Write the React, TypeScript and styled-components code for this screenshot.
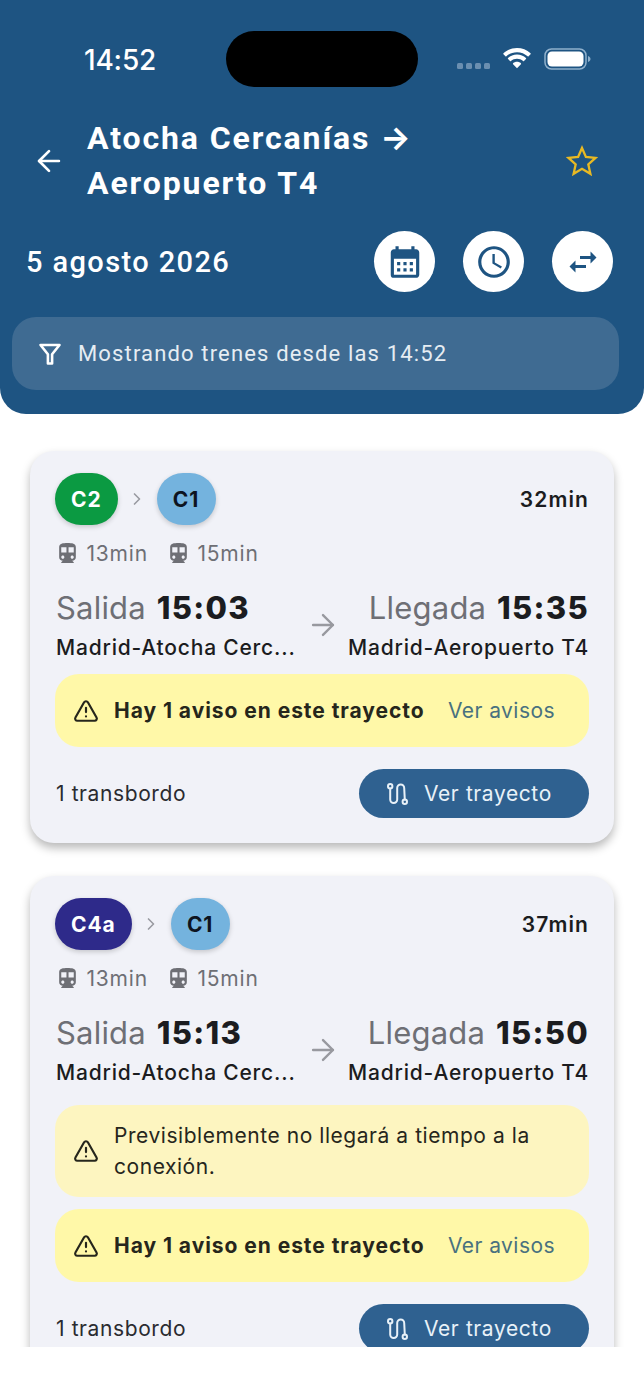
import React from 'react';
import styled, {createGlobalStyle} from 'styled-components';
import {ArrowLeft, ArrowRight, ChevronRight, TriangleAlert} from 'lucide-react';
import {MdCalendarMonth, MdAccessTime, MdSwapHoriz, MdDirectionsSubway} from 'react-icons/md';

const colors = {
  header: '#1e5482',
  card: '#f1f2f8',
  button: '#2f6190',
  ink: '#1b1c20',
  grey: '#6e6f75',
};

const GlobalStyle = createGlobalStyle`
  html, body {
    margin: 0;
    background: #fff;
  }
  body {
    font-family: 'Inter', 'Liberation Sans', sans-serif;
  }
`;

const Screen = styled.div`
  width: 644px;
  height: 1347px;
  overflow: hidden;
  background: #fff;
`;

const Header = styled.header`
  height: 414px;
  box-sizing: border-box;
  background: ${colors.header};
  border-radius: 0 0 26px 26px;
  padding-top: 31px;
  color: #fff;
  font-family: 'Roboto', sans-serif;
`;

const StatusBar = styled.div`
  height: 56px;
  display: flex;
  align-items: center;
  padding: 0 53px 0 84px;
`;

const Clock = styled.span`
  width: 142px;
  margin-top: 2px;
  font-family: 'Inter', sans-serif;
  font-size: 28px;
  font-weight: 500;
  letter-spacing: -0.2px;
`;

const Island = styled.div`
  width: 192px;
  height: 56px;
  border-radius: 28px;
  background: #000;
`;

const StatusIcons = styled.div`
  margin-left: auto;
  display: flex;
  align-items: center;
  gap: 13px;
  height: 28px;
`;

const Dots = styled.div`
  display: flex;
  gap: 3px;
  margin-top: 13px;
`;

const Dot = styled.i`
  width: 6px;
  height: 6px;
  border-radius: 1.5px;
  background: #6b8fb0;
`;

const TitleRow = styled.div`
  display: flex;
  align-items: center;
  margin-top: 28px;
  padding: 0 46px 0 32px;
`;

const IconSlot = styled.div`
  width: 55px;
  display: flex;
  flex-shrink: 0;
`;

const Title = styled.h1`
  flex: 1;
  margin: 0;
  font-size: 32px;
  line-height: 45px;
  font-weight: 700;
  letter-spacing: 1.9px;
`;

const TitleArrow = styled.span`
  font-family: 'Inter', sans-serif;
  font-weight: 700;
  letter-spacing: 0;
`;

const DateRow = styled.div`
  display: flex;
  align-items: center;
  gap: 28px;
  margin-top: 25px;
  padding: 0 31px 0 26px;
`;

const DateText = styled.div`
  flex: 1;
  font-size: 29px;
  font-weight: 500;
  letter-spacing: 1.4px;
`;

const RoundButton = styled.button`
  width: 61px;
  height: 61px;
  border: 0;
  padding: 0;
  border-radius: 50%;
  background: #fff;
  color: ${colors.header};
  display: flex;
  align-items: center;
  justify-content: center;
`;

const FilterBar = styled.div`
  height: 73px;
  margin: 25px 25px 0 12px;
  padding-left: 26px;
  box-sizing: border-box;
  display: flex;
  align-items: center;
  gap: 16px;
  background: #3f6b92;
  border-radius: 24px;
  font-size: 22px;
  letter-spacing: 1.15px;
  color: #e6edf3;
`;

const List = styled.main`
  display: flex;
  flex-direction: column;
  gap: 33px;
  padding: 37px 30px 0;
`;

const Card = styled.article`
  background: ${colors.card};
  border-radius: 24px;
  padding: 22px 25px 25px;
  box-shadow: 0 5px 10px rgba(0, 0, 0, 0.28);
`;

const TopRow = styled.div`
  display: flex;
  align-items: center;
`;

const Lines = styled.div`
  flex: 1;
  display: flex;
  align-items: center;
  gap: 9.5px;
  color: #9a9ba1;
`;

const LineBadge = styled.div<{$bg: string; $fg: string}>`
  min-width: 59px;
  height: 52px;
  padding: 0 16px;
  box-sizing: border-box;
  display: flex;
  align-items: center;
  justify-content: center;
  border-radius: 26px;
  background: ${p => p.$bg};
  color: ${p => p.$fg};
  font-size: 21px;
  font-weight: 700;
  letter-spacing: 0.9px;
  box-shadow: 0 2px 5px rgba(0, 0, 0, 0.18);
`;

const Total = styled.div`
  font-size: 21px;
  font-weight: 600;
  color: ${colors.ink};
  letter-spacing: 1.1px;
`;

const Legs = styled.div`
  display: flex;
  gap: 18px;
  margin-top: 12px;
  height: 32px;
  align-items: center;
`;

const Leg = styled.div`
  display: flex;
  align-items: center;
  gap: 6.5px;
  font-size: 21px;
  letter-spacing: 0.8px;
  color: ${colors.grey};
`;

const Times = styled.div`
  display: flex;
  align-items: center;
  margin-top: 18px;
  padding-left: 1px;
`;

const Stop = styled.div<{$end?: boolean}>`
  width: 240px;
  flex-shrink: 0;
  display: flex;
  flex-direction: column;
  align-items: ${p => (p.$end ? 'flex-end' : 'flex-start')};
`;

const TimeLine = styled.div`
  font-size: 31px;
  line-height: 42px;
  color: ${colors.grey};
  white-space: nowrap;
  letter-spacing: 0.2px;
  word-spacing: 2px;

  b {
    color: ${colors.ink};
    font-weight: 800;
    letter-spacing: 1.3px;
  }
`;

const Station = styled.div`
  margin-top: 5px;
  font-size: 21px;
  line-height: 28px;
  font-weight: 500;
  color: ${colors.ink};
  letter-spacing: 0.8px;
  white-space: nowrap;
`;

const ArrowSlot = styled.div`
  flex: 1;
  display: flex;
  justify-content: center;
  color: #98999f;
`;

const Notice = styled.div<{$soft?: boolean; $top: number}>`
  margin-top: ${p => p.$top}px;
  min-height: 73px;
  box-sizing: border-box;
  display: flex;
  align-items: center;
  gap: 15px;
  padding: ${p => (p.$soft ? '15px 18px' : '0 34px 0 18px')};
  border-radius: 24px;
  background: ${p => (p.$soft ? '#fdf5c0' : '#fff8a8')};
  color: #26261c;
  font-size: 21px;
  line-height: 31px;
  letter-spacing: 0.55px;
`;

const NoticeStrong = styled.span`
  flex: 1;
  font-weight: 700;
  white-space: nowrap;
  letter-spacing: 0.95px;
`;

const NoticeLink = styled.span`
  color: #49717f;
  letter-spacing: 0.45px;
`;

const Footer = styled.div`
  display: flex;
  align-items: center;
  justify-content: space-between;
  margin-top: 22px;
  padding-left: 1px;
`;

const Changes = styled.span`
  font-size: 21px;
  color: #2a2b30;
  letter-spacing: 0.6px;
`;

const RouteButton = styled.button`
  width: 230px;
  height: 49px;
  border: 0;
  border-radius: 25px;
  padding: 0 0 0 28px;
  background: ${colors.button};
  color: #e8f1f8;
  display: flex;
  align-items: center;
  gap: 16px;
  font-family: 'Inter', sans-serif;
  font-size: 21px;
  letter-spacing: 0.6px;
`;

const WifiIcon = () => (
  <svg width="28" height="22" viewBox="0 0 30 24" fill="#fff" preserveAspectRatio="none">
    <path d="M15 3.500c4.400 0 8.400 1.700 11.400 4.500.3.3.7.3 1 0l2.100-2.200c.3-.3.3-.8 0-1.100C25.600 1 20.500-1 15-1S4.400 1 .5 4.700c-.3.3-.3.8 0 1.100L2.600 8c.3.3.7.3 1 0C6.600 5.200 10.600 3.500 15 3.500z" transform="translate(0 1)" />
    <path d="M15 10.700c2.500 0 4.700.9 6.500 2.500.3.3.7.3 1 0l2.100-2.200c.3-.3.3-.8 0-1.100-2.500-2.400-5.900-3.900-9.600-3.900s-7.100 1.500-9.600 3.900c-.3.3-.3.8 0 1.100l2.100 2.200c.3.3.7.3 1 0 1.800-1.600 4-2.500 6.500-2.500z" transform="translate(0 1)" />
    <path d="M15 21l4.200-4.300c.3-.3.3-.8 0-1.100-1.100-1-2.600-1.600-4.200-1.600s-3.100.6-4.200 1.600c-.3.3-.3.8 0 1.100L15 21z" transform="translate(0 1)" />
  </svg>
);

const BatteryIcon = () => (
  <svg width="47" height="22" viewBox="0 0 47 22">
    <rect x="1" y="1" width="41" height="20" rx="6.500" fill="none" stroke="#8fb0cc" strokeWidth="1.500" />
    <rect x="3.500" y="3.500" width="36" height="15" rx="4.500" fill="#fff" />
    <path d="M44 8v6c1.500-.4 2.500-1.700 2.500-3S45.500 8.400 44 8z" fill="#8fb0cc" />
  </svg>
);

const StarIcon = () => (
  <svg width="32" height="32" viewBox="0 0 32 32" fill="none" stroke="#e8b923" strokeWidth="2.300">
    <polygon points="16,3 19.900,12 29.500,12.900 22.300,19.300 24.400,28.800 16,23.800 7.600,28.800 9.700,19.300 2.500,12.900 12.100,12" />
  </svg>
);

const FunnelIcon = () => (
  <svg width="24" height="24" viewBox="0 0 24 24" fill="none" stroke="#fff" strokeWidth="2.600" strokeLinejoin="round" strokeLinecap="round">
    <path d="M2.500 3h19l-7.400 9.300V21.500h-4.200V12.300z" />
  </svg>
);

const RouteIcon = () => (
  <svg width="21" height="22" viewBox="0 0 21 22" fill="none" stroke="currentColor" strokeWidth="2" strokeLinecap="round">
    <circle cx="3.200" cy="3.200" r="2.200" />
    <circle cx="17.800" cy="18.800" r="2.200" />
    <path d="M3.200 5.400V16.500a3.500 3.500 0 0 0 7 0V5a3.500 3.500 0 0 1 7 0L17.800 16.600" />
  </svg>
);

type Line = {name: string; bg: string; fg: string};
type Trip = {
  lines: Line[];
  total: string;
  departure: string;
  arrival: string;
  warning?: string;
};

const c1: Line = {name: 'C1', bg: '#74b3de', fg: '#0d1420'};

const trips: Trip[] = [
  {
    lines: [{name: 'C2', bg: '#0b9a42', fg: '#fff'}, c1],
    total: '32min',
    departure: '15:03',
    arrival: '15:35',
  },
  {
    lines: [{name: 'C4a', bg: '#2e2a8a', fg: '#fff'}, c1],
    total: '37min',
    departure: '15:13',
    arrival: '15:50',
    warning: 'Previsiblemente no llegará a tiempo a la conexión.',
  },
];

const TripCard = ({trip}: {trip: Trip}) => (
  <Card>
    <TopRow>
      <Lines>
        <LineBadge $bg={trip.lines[0].bg} $fg={trip.lines[0].fg}>{trip.lines[0].name}</LineBadge>
        <ChevronRight size={20} strokeWidth={2} />
        <LineBadge $bg={trip.lines[1].bg} $fg={trip.lines[1].fg}>{trip.lines[1].name}</LineBadge>
      </Lines>
      <Total>{trip.total}</Total>
    </TopRow>
    <Legs>
      <Leg><MdDirectionsSubway size={25} />13min</Leg>
      <Leg><MdDirectionsSubway size={25} />15min</Leg>
    </Legs>
    <Times>
      <Stop>
        <TimeLine>Salida <b>{trip.departure}</b></TimeLine>
        <Station>Madrid-Atocha Cerc...</Station>
      </Stop>
      <ArrowSlot><ArrowRight size={34} strokeWidth={1.7} /></ArrowSlot>
      <Stop $end>
        <TimeLine>Llegada <b>{trip.arrival}</b></TimeLine>
        <Station>Madrid-Aeropuerto T4</Station>
      </Stop>
    </Times>
    {trip.warning && (
      <Notice $soft $top={18}>
        <TriangleAlert size={26} strokeWidth={2} style={{flexShrink: 0}} />
        <span>{trip.warning}</span>
      </Notice>
    )}
    <Notice $top={trip.warning ? 12 : 12}>
      <TriangleAlert size={26} strokeWidth={2} style={{flexShrink: 0}} />
      <NoticeStrong>Hay 1 aviso en este trayecto</NoticeStrong>
      <NoticeLink>Ver avisos</NoticeLink>
    </Notice>
    <Footer>
      <Changes>1 transbordo</Changes>
      <RouteButton><RouteIcon />Ver trayecto</RouteButton>
    </Footer>
  </Card>
);

export default function App() {
  return (
    <Screen>
      <GlobalStyle />
      <Header>
        <StatusBar>
          <Clock>14:52</Clock>
          <Island />
          <StatusIcons>
            <Dots><Dot /><Dot /><Dot /><Dot /></Dots>
            <WifiIcon />
            <BatteryIcon />
          </StatusIcons>
        </StatusBar>
        <TitleRow>
          <IconSlot><ArrowLeft size={34} strokeWidth={1.9} /></IconSlot>
          <Title>Atocha Cercanías <TitleArrow>→</TitleArrow><br />Aeropuerto T4</Title>
          <StarIcon />
        </TitleRow>
        <DateRow>
          <DateText>5 agosto 2026</DateText>
          <RoundButton><MdCalendarMonth size={38} /></RoundButton>
          <RoundButton><MdAccessTime size={38} /></RoundButton>
          <RoundButton><MdSwapHoriz size={36} /></RoundButton>
        </DateRow>
        <FilterBar>
          <FunnelIcon />
          Mostrando trenes desde las 14:52
        </FilterBar>
      </Header>
      <List>
        {trips.map(trip => <TripCard key={trip.departure} trip={trip} />)}
      </List>
    </Screen>
  );
}
